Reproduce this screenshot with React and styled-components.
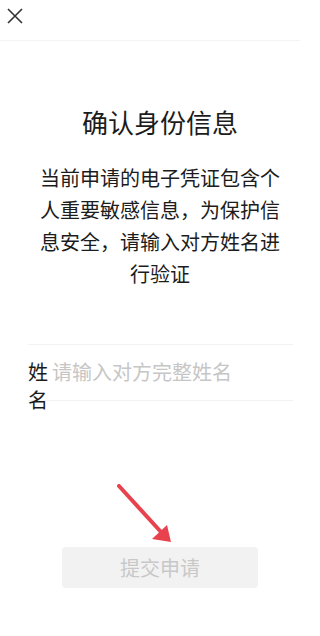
import React from 'react';
import styled, { createGlobalStyle } from 'styled-components';

const GlobalStyle = createGlobalStyle`
    html, body {
        margin: 0;
        padding: 0;
        background: #ffffff;
    }
    body {
        font-family: "Noto Sans CJK SC", "Noto Sans", sans-serif;
        color: #1c1c1c;
    }
`;

function App() {
    return (
        <Page>
            <GlobalStyle />
            <Header>
                <CloseButton aria-label="关闭">
                    <svg width="16" height="16" viewBox="0 0 16 16">
                        <path d="M1 1 L15 15 M15 1 L1 15" stroke="#333" strokeWidth="1.6" fill="none" />
                    </svg>
                </CloseButton>
            </Header>

            <Title>确认身份信息</Title>
            <Description>
                当前申请的电子凭证包含个人重要敏感信息，为保护信息安全，请输入对方姓名进行验证
            </Description>

            <FieldRow>
                <FieldLabel>姓名</FieldLabel>
                <FieldInput placeholder="请输入对方完整姓名" />
            </FieldRow>

            <SubmitButton disabled>提交申请</SubmitButton>

            {/* annotation arrow pointing at the button */}
            <Arrow width="60" height="62" viewBox="0 0 60 62">
                <path d="M2 2 L44 48" stroke="#e8424f" strokeWidth="4" strokeLinecap="round" fill="none" />
                <polygon points="54,58 35,55 50,41" fill="#e8424f" />
            </Arrow>
        </Page>
    );
}

const Page = styled.div`
    position: relative;
    width: 300px;
    height: 636px;
    overflow: hidden;
    background: #fff;
`;

const Header = styled.div`
    display: flex;
    align-items: center;
    height: 40px;
    padding-left: 7px;
    border-bottom: 1px solid #f4f4f4;
`;

const CloseButton = styled.button`
    display: flex;
    align-items: center;
    justify-content: center;
    padding: 0;
    margin-top: -9px;
    border: none;
    background: none;
    width: 16px;
    height: 16px;
`;

const Title = styled.h1`
    margin: 63px 0 0;
    padding-left: 20px;
    font-size: 26px;
    font-weight: 400;
    line-height: 36px;
    text-align: center;
    color: #1c1c1c;
`;

const Description = styled.p`
    margin: 22px 0 0;
    padding: 0 12px 0 32px;
    font-size: 20px;
    line-height: 32px;
    text-align: center;
    color: #1c1c1c;
`;

const FieldRow = styled.div`
    display: flex;
    align-items: flex-start;
    gap: 4px;
    height: 57px;
    margin: 54px 7px 0 28px;
    padding-top: 13px;
    box-sizing: border-box;
    border-top: 1px solid #f2f2f2;
    border-bottom: 1px solid #f2f2f2;
`;

const FieldLabel = styled.label`
    flex: 0 0 20px;
    width: 20px;
    font-size: 20px;
    line-height: 28px;
    color: #1c1c1c;
`;

const FieldInput = styled.input`
    flex: 1;
    min-width: 0;
    height: 28px;
    padding: 0;
    border: none;
    outline: none;
    font-family: "Noto Sans CJK SC", "Noto Sans", sans-serif;
    font-size: 20px;
    line-height: 28px;
    color: #1c1c1c;
    background: transparent;

    &::placeholder {
        color: #c6c6c6;
    }
`;

const SubmitButton = styled.button`
    display: block;
    width: 196px;
    height: 41px;
    margin: 146px 0 0 62px;
    border: none;
    border-radius: 4px;
    background: #f2f2f2;
    color: #c8c8c8;
    font-family: "Noto Sans CJK SC", "Noto Sans", sans-serif;
    font-size: 20px;
`;

const Arrow = styled.svg`
    position: absolute;
    left: 117px;
    top: 484px;
`;

export default App;
